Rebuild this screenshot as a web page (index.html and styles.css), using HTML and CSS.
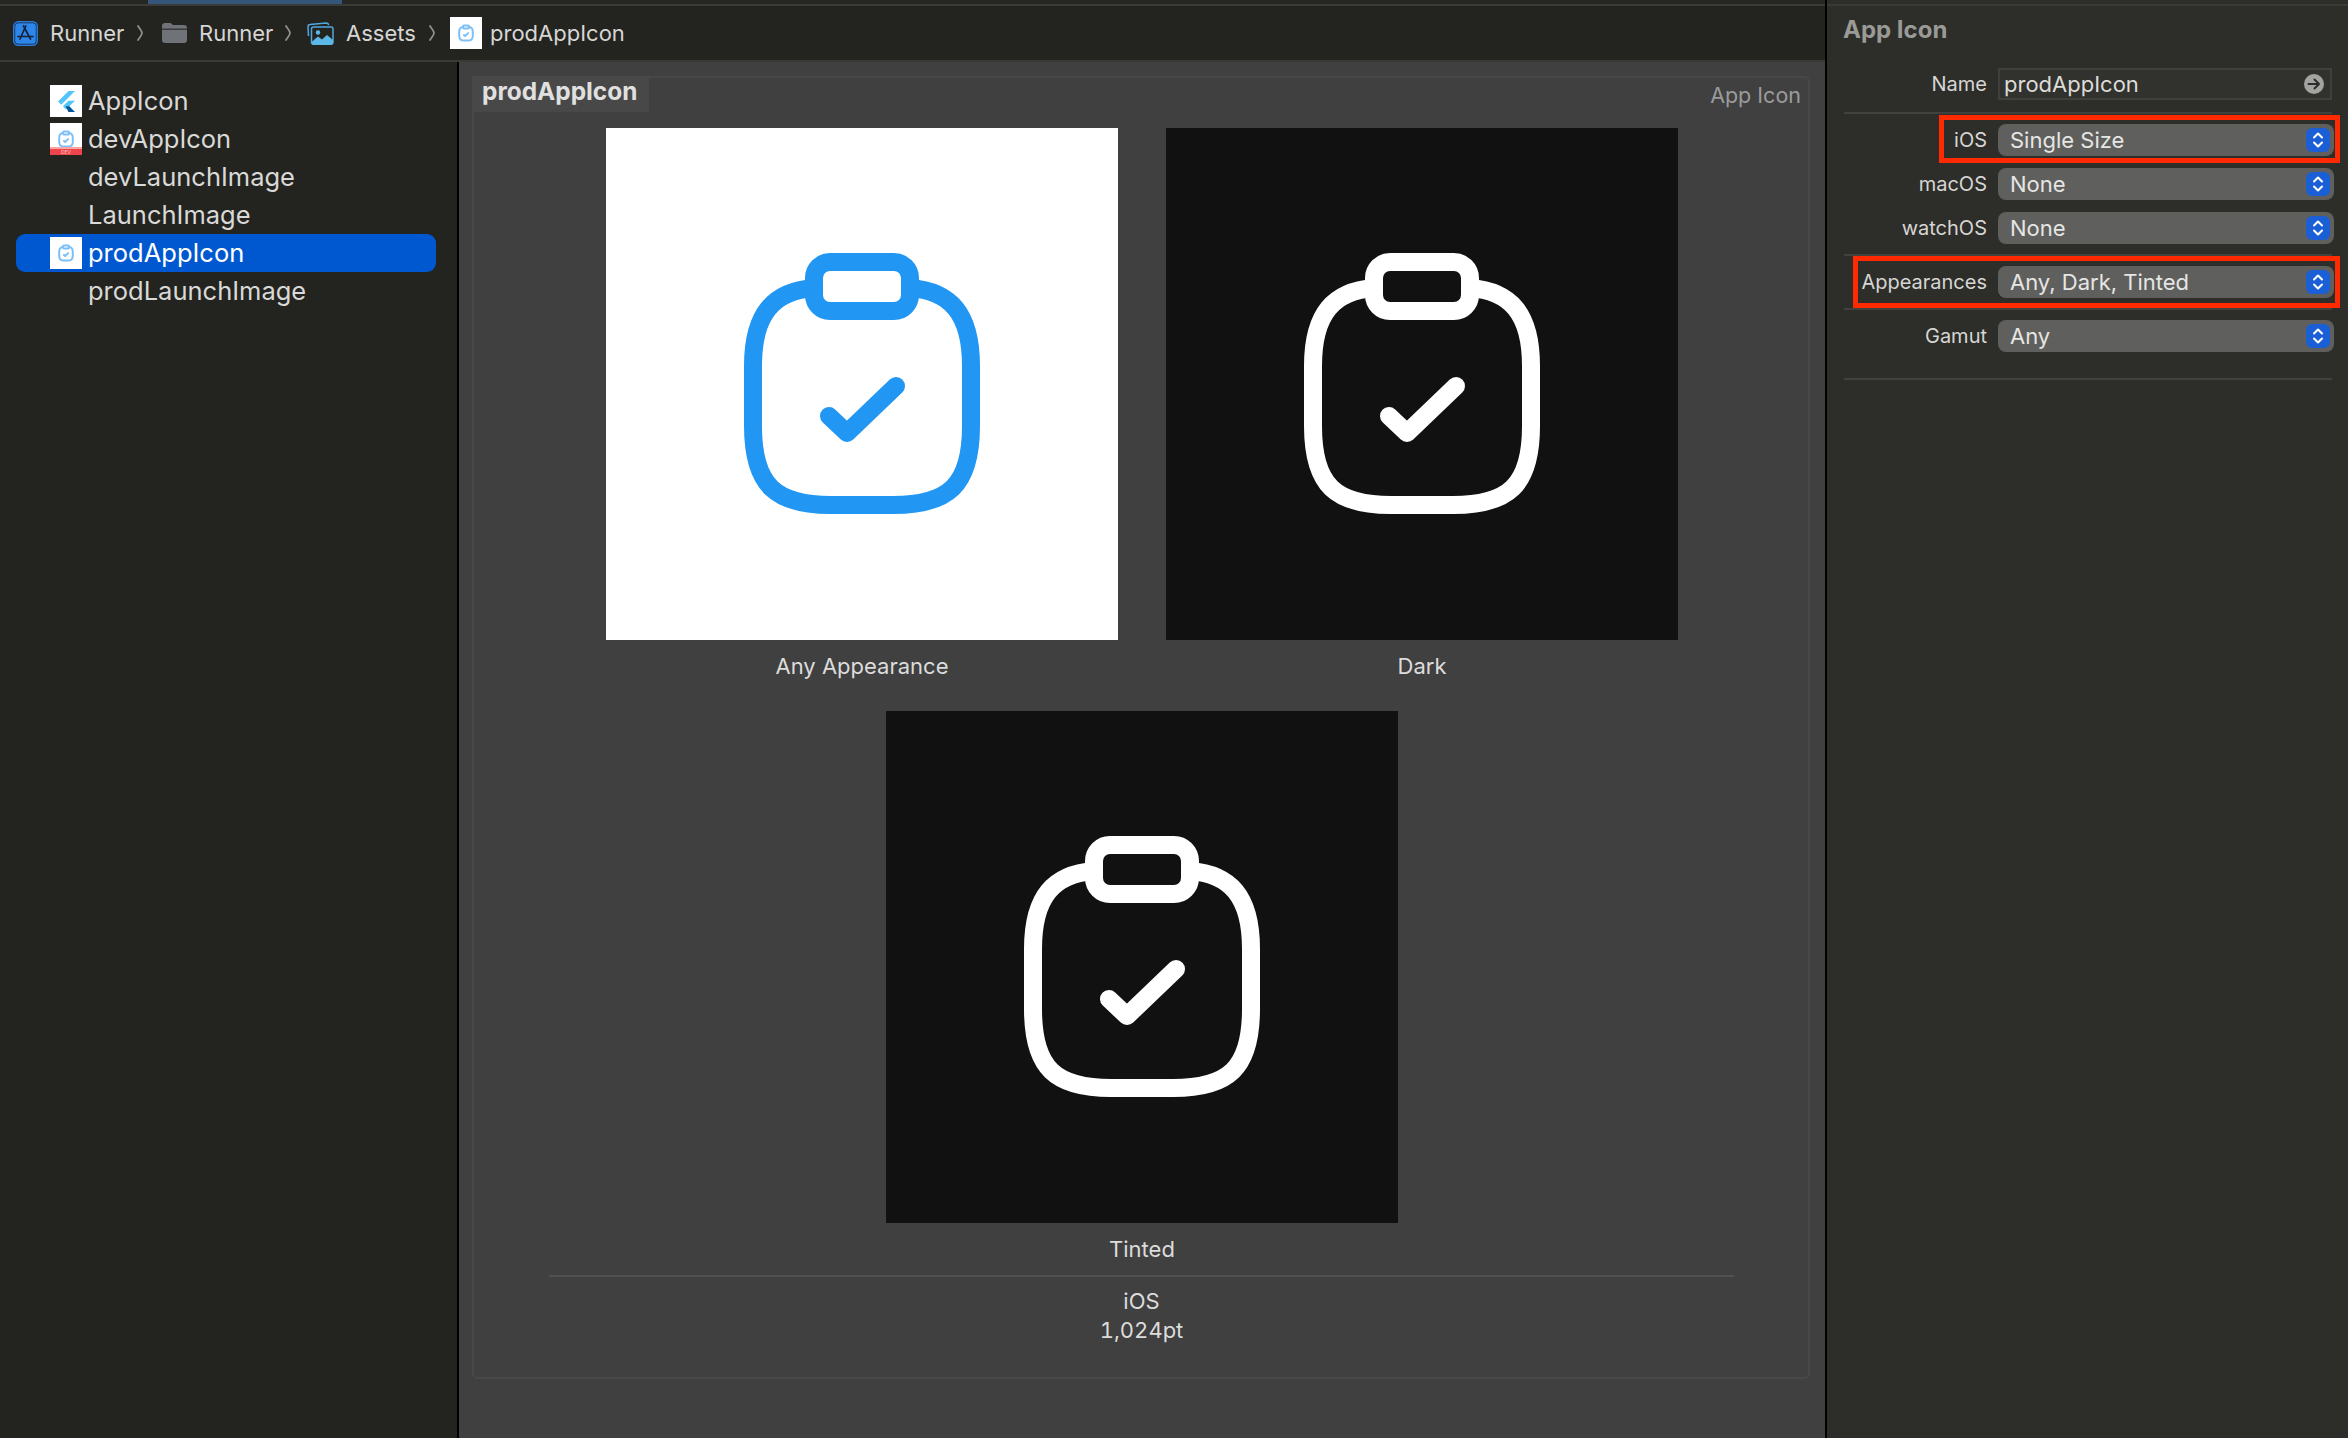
FILE: index.html
```html
<!DOCTYPE html>
<html lang="en">
<head>
    <meta charset="UTF-8">
    <title>prodAppIcon - Assets</title>
    <link rel="stylesheet" href="styles.css">
</head>
<body>
    <svg class="defs" width="0" height="0">
        <symbol id="clipboard" viewBox="0 -23 512 512">
            <g fill="none" stroke="currentColor" stroke-linecap="round" stroke-linejoin="round">
                <path d="M208 137C168 140 147 162 147 215V275C147 335 170 354 225 354H287C342 354 365 335 365 275V215C365 162 344 140 304 137"/>
                <rect x="208" y="111" width="96" height="49" rx="16"/>
                <path d="M223 265L241 282L290 235"/>
            </g>
        </symbol>
        <symbol id="stepper" viewBox="0 0 24 24">
            <path d="M8 9.5L12 5.5L16 9.5M8 14.5L12 18.5L16 14.5" fill="none" stroke="#fff" stroke-width="2" stroke-linecap="round" stroke-linejoin="round"/>
        </symbol>
        <symbol id="chevron" viewBox="0 0 6 16">
            <path d="M1 1C3 4 5 6 5 8C5 10 3 12 1 15" fill="none" stroke="#8e8e8b" stroke-width="1.8" stroke-linecap="round" stroke-linejoin="round"/>
        </symbol>
    </svg>

    <div class="app">
        <div class="workspace">
            <div class="tab-strip"><div class="tab-active"></div></div>
            <nav class="breadcrumb">
                <svg class="crumb-project" viewBox="0 0 25 25">
                    <rect x="0.75" y="0.75" width="23.5" height="23.5" rx="4.5" fill="#16233a" stroke="#2a7ad8" stroke-width="1.5"/>
                    <rect x="2.2" y="2.2" width="20.6" height="20.6" rx="3" fill="#2d86ea"/>
                    <path d="M12.8 5L7 18M10.5 5L17.5 18M5 15.5H20" fill="none" stroke="#16233a" stroke-width="1.7" stroke-linecap="round"/>
                </svg>
                <span class="crumb-text crumb-first">Runner</span>
                <svg class="crumb-chevron"><use href="#chevron"/></svg>
                <svg class="crumb-folder" viewBox="0 0 25 20">
                    <path d="M0 3C0 1 1 0 3 0H8C9.500 0 10 1.500 11 2H22C24 2 25 3 25 5V17C25 19 24 20 22 20H3C1 20 0 19 0 17Z" fill="#6f7276"/>
                    <path d="M0 6.200H25" stroke="#2b2c2d" stroke-width="1.200"/>
                </svg>
                <span class="crumb-text crumb-second">Runner</span>
                <svg class="crumb-chevron"><use href="#chevron"/></svg>
                <svg class="crumb-assets" viewBox="0 0 27 23">
                    <path d="M1.500 14L1 5C1 3.500 2 2.500 3 2.500L19 1C20.500 1 21.500 1.800 21.500 3.200" fill="none" stroke="#4fa9df" stroke-width="1.500"/>
                    <rect x="4.500" y="5" width="21.500" height="17" rx="2" fill="#232320" stroke="#4fa9df" stroke-width="1.500"/>
                    <circle cx="11" cy="10.500" r="2.200" fill="#5db7e6"/>
                    <path d="M4.500 20L11 14.500L15 17.500L20 13L26 18V21C26 22 25 23 24 23H6C5 23 4.500 22 4.500 21Z" fill="#5db7e6"/>
                </svg>
                <span class="crumb-text crumb-third">Assets</span>
                <svg class="crumb-chevron"><use href="#chevron"/></svg>
                <span class="thumb crumb-thumb"><svg class="thumb-icon"><use href="#clipboard"/></svg></span>
                <span class="crumb-text">prodAppIcon</span>
            </nav>

            <div class="main">
                <aside class="sidebar">
                    <div class="asset-row">
                        <span class="thumb">
                            <svg class="thumb-flutter" viewBox="0 0 24 24">
                                <path d="M14.3 0L2.300 12L6 15.700L21.700 0Z" fill="#54c5f8"/>
                                <path d="M14.300 11.100L7.900 17.500L11.500 21L21.700 11.100Z" fill="#54c5f8"/>
                                <path d="M11 17.500L14.300 24H21.700L15.200 17.500Z" fill="#01579b"/>
                            </svg>
                        </span>
                        AppIcon
                    </div>
                    <div class="asset-row">
                        <span class="thumb thumb-dev">
                            <svg class="thumb-icon"><use href="#clipboard"/></svg>
                            <span class="dev-band">DEV</span>
                        </span>
                        devAppIcon
                    </div>
                    <div class="asset-row">devLaunchImage</div>
                    <div class="asset-row">LaunchImage</div>
                    <div class="asset-row selected">
                        <span class="thumb"><svg class="thumb-icon"><use href="#clipboard"/></svg></span>
                        prodAppIcon
                    </div>
                    <div class="asset-row">prodLaunchImage</div>
                </aside>

                <section class="canvas">
                    <div class="card">
                        <div class="card-head">
                            <span class="card-title">prodAppIcon</span>
                            <span class="card-kind">App Icon</span>
                        </div>
                        <div class="slots">
                            <figure class="slot">
                                <div class="slot-image light"><svg class="slot-icon"><use href="#clipboard"/></svg></div>
                                <figcaption>Any Appearance</figcaption>
                            </figure>
                            <figure class="slot">
                                <div class="slot-image dark"><svg class="slot-icon"><use href="#clipboard"/></svg></div>
                                <figcaption>Dark</figcaption>
                            </figure>
                            <figure class="slot">
                                <div class="slot-image dark"><svg class="slot-icon"><use href="#clipboard"/></svg></div>
                                <figcaption>Tinted</figcaption>
                            </figure>
                        </div>
                        <div class="slot-group">iOS<br>1,024pt</div>
                    </div>
                </section>
            </div>
        </div>

        <aside class="inspector">
            <div class="tab-strip"></div>
            <h2 class="inspector-title">App Icon</h2>

            <div class="field name-field">
                <label>Name</label>
                <div class="name-input">
                    prodAppIcon
                    <svg class="go-arrow" viewBox="0 0 20 20">
                        <circle cx="10" cy="10" r="10" fill="#a3a3a1"/>
                        <path d="M4.500 10H15M10.500 5.500L15 10L10.500 14.500" fill="none" stroke="#2d2d29" stroke-width="2" stroke-linecap="round" stroke-linejoin="round"/>
                    </svg>
                </div>
            </div>
            <div class="rule"></div>

            <div class="field ios-field">
                <span class="marker marker-ios"></span>
                <label>iOS</label>
                <div class="select">Single Size<svg class="select-stepper"><use href="#stepper"/></svg></div>
            </div>
            <div class="field macos-field">
                <label>macOS</label>
                <div class="select">None<svg class="select-stepper"><use href="#stepper"/></svg></div>
            </div>
            <div class="field watchos-field">
                <label>watchOS</label>
                <div class="select">None<svg class="select-stepper"><use href="#stepper"/></svg></div>
            </div>
            <div class="rule rule-appearance"></div>

            <div class="field appearance-field">
                <span class="marker marker-appearance"></span>
                <label>Appearances</label>
                <div class="select">Any, Dark, Tinted<svg class="select-stepper"><use href="#stepper"/></svg></div>
            </div>
            <div class="rule rule-gamut"></div>

            <div class="field gamut-field">
                <label>Gamut</label>
                <div class="select">Any<svg class="select-stepper"><use href="#stepper"/></svg></div>
            </div>
            <div class="rule rule-end"></div>
        </aside>
    </div>
</body>
</html>
```

FILE: styles.css
```css
html, body {
    margin: 0;
    padding: 0;
    height: 100%;
    overflow: hidden;
}

body {
    font-family: Inter, "Noto Sans", sans-serif;
    background-color: #232320;
    color: #d9d9d7;
}

.defs {
    position: absolute;
}

.app {
    display: flex;
    width: 2348px;
    height: 1438px;
}

.workspace {
    width: 1825px;
    display: flex;
    flex-direction: column;
    border-right: 2px solid #000;
}

.tab-strip {
    height: 4px;
    border-bottom: 2px solid #3a3a36;
    background-color: #262623;
}

.tab-active {
    width: 194px;
    height: 4px;
    margin-left: 148px;
    background-color: #36557a;
}

/* Breadcrumb bar */
.breadcrumb {
    height: 54px;
    display: flex;
    align-items: center;
    padding-left: 13px;
    border-bottom: 2px solid #3a3a36;
    font-size: 22px;
    color: #d6d6d4;
}

.crumb-project {
    width: 25px;
    height: 25px;
    margin-right: 12px;
}

.crumb-first {
    width: 87px;
}

.crumb-second {
    width: 86px;
}

.crumb-third {
    width: 83px;
}

.crumb-chevron {
    width: 6px;
    height: 16px;
    margin-right: 19px;
}

.crumb-second + .crumb-chevron {
    margin-right: 16px;
}

.crumb-folder {
    width: 25px;
    height: 20px;
    margin-right: 12px;
}

.crumb-assets {
    width: 27px;
    height: 23px;
    margin-right: 12px;
}

.thumb.crumb-thumb {
    margin-left: -4px;
    margin-right: 8px;
}

.main {
    flex: 1;
    display: flex;
    min-height: 0;
}

/* Asset list */
.sidebar {
    width: 459px;
    box-sizing: border-box;
    padding: 20px 21px 0 16px;
    border-right: 2px solid #000;
    font-size: 25.5px;
}

.asset-row {
    height: 38px;
    box-sizing: border-box;
    display: flex;
    align-items: center;
    padding: 0 0 2px 72px;
    border-radius: 9px;
}

.asset-row.selected {
    background-color: #0058d0;
    color: #fff;
}

.thumb {
    width: 32px;
    height: 32px;
    background-color: #fff;
    color: #7cc0f8;
    display: flex;
    align-items: center;
    justify-content: center;
    flex: none;
    margin-right: 6px;
}

.asset-row .thumb {
    margin-left: -38px;
    margin-bottom: -2px;
}

.thumb-icon {
    width: 32px;
    height: 32px;
    stroke-width: 32;
}

.thumb-flutter {
    width: 21px;
    height: 23px;
}

.thumb-dev {
    position: relative;
}

.dev-band {
    position: absolute;
    left: 0;
    right: 0;
    bottom: 0;
    height: 8px;
    background-color: #ef4449;
    border-top: 2px solid #f7a5a5;
    box-sizing: border-box;
    font-size: 5px;
    line-height: 6px;
    text-align: center;
    color: #f8c8c8;
}

/* Center editor */
.canvas {
    flex: 1;
    background-color: #404040;
    padding: 14px 15px 0 13px;
}

.card {
    height: 1303px;
    box-sizing: border-box;
    border: 2px solid #484848;
    border-radius: 6px;
}

.card-head {
    height: 34px;
    display: flex;
    align-items: flex-start;
    justify-content: space-between;
}

.card-title {
    height: 36px;
    margin: -2px 0 0 -2px;
    padding: 0 12px 0 10px;
    line-height: 31px;
    background-color: #484848;
    font-size: 24.4px;
    font-weight: 700;
    color: #e0e0e0;
}

.card-kind {
    margin: 3px 7px 0 0;
    line-height: 28px;
    font-size: 21.5px;
    color: #9b9b9b;
}

.slots {
    display: flex;
    flex-wrap: wrap;
    justify-content: center;
    column-gap: 48px;
    row-gap: 19px;
    padding: 16px 104px 0 106px;
}

.slot {
    width: 512px;
    margin: 0;
    text-align: center;
}

.slot figcaption {
    height: 52px;
    line-height: 52px;
    font-size: 22px;
    color: #dcdcdc;
}

.slot-image {
    width: 512px;
    height: 512px;
}

.slot-image.light {
    background-color: #fff;
    color: #2196f3;
}

.slot-image.dark {
    background-color: #111;
    color: #fff;
}

.slot-icon {
    display: block;
    width: 512px;
    height: 512px;
    stroke-width: 18;
}

.slot-group {
    margin: 0 74px 0 75px;
    padding-top: 10px;
    border-top: 2px solid #515151;
    text-align: center;
    line-height: 29px;
    font-size: 22px;
    font-variant-numeric: tabular-nums;
    color: #dcdcdc;
}

/* Inspector */
.inspector {
    flex: 1;
    background-color: #2d2d29;
    font-size: 20px;
}

.inspector .tab-strip {
    background-color: #2d2d29;
}

.inspector-title {
    margin: 0;
    padding-left: 16px;
    height: 52px;
    line-height: 48px;
    font-size: 24px;
    font-weight: 700;
    color: #9a9a97;
}

.field {
    display: flex;
    align-items: center;
    height: 32px;
    padding-left: 17px;
    position: relative;
}

.field label {
    width: 143px;
    margin-right: 11px;
    text-align: right;
    color: #d6d6d4;
}

.name-field {
    margin-top: 10px;
}

.name-input {
    width: 334px;
    height: 32px;
    box-sizing: border-box;
    padding: 0 6px 0 4px;
    display: flex;
    align-items: center;
    justify-content: space-between;
    border: 2px solid #3f3f3b;
    background-color: #31312d;
    font-size: 22px;
    color: #dcdcda;
}

.go-arrow {
    width: 20px;
    height: 20px;
}

.rule {
    height: 2px;
    margin: 12px 16px 0 17px;
    background-color: #41413d;
}

.ios-field {
    margin-top: 10px;
}

.macos-field, .watchos-field {
    margin-top: 12px;
}

.rule-appearance {
    margin-top: 10px;
}

.appearance-field {
    margin-top: 10px;
}

.rule-gamut {
    margin-top: 10px;
}

.gamut-field {
    margin-top: 10px;
}

.rule-end {
    margin-top: 26px;
}

.select {
    width: 336px;
    height: 32px;
    box-sizing: border-box;
    display: flex;
    align-items: center;
    justify-content: space-between;
    padding: 0 4px 0 12px;
    border-radius: 8px;
    background-color: #5f5f5d;
    font-size: 22px;
    color: #e6e6e4;
}

.select-stepper {
    width: 24px;
    height: 24px;
    border-radius: 6px;
    background-color: #1a5fd6;
}

/* Red annotation boxes drawn over the fields */
.marker {
    position: absolute;
    border: 5px solid #ff2a00;
    box-sizing: border-box;
    z-index: 1;
}

.marker-ios {
    left: 112px;
    right: 8px;
    top: -9px;
    height: 48px;
}

.marker-appearance {
    left: 26px;
    right: 8px;
    top: -10px;
    height: 52px;
}
```
